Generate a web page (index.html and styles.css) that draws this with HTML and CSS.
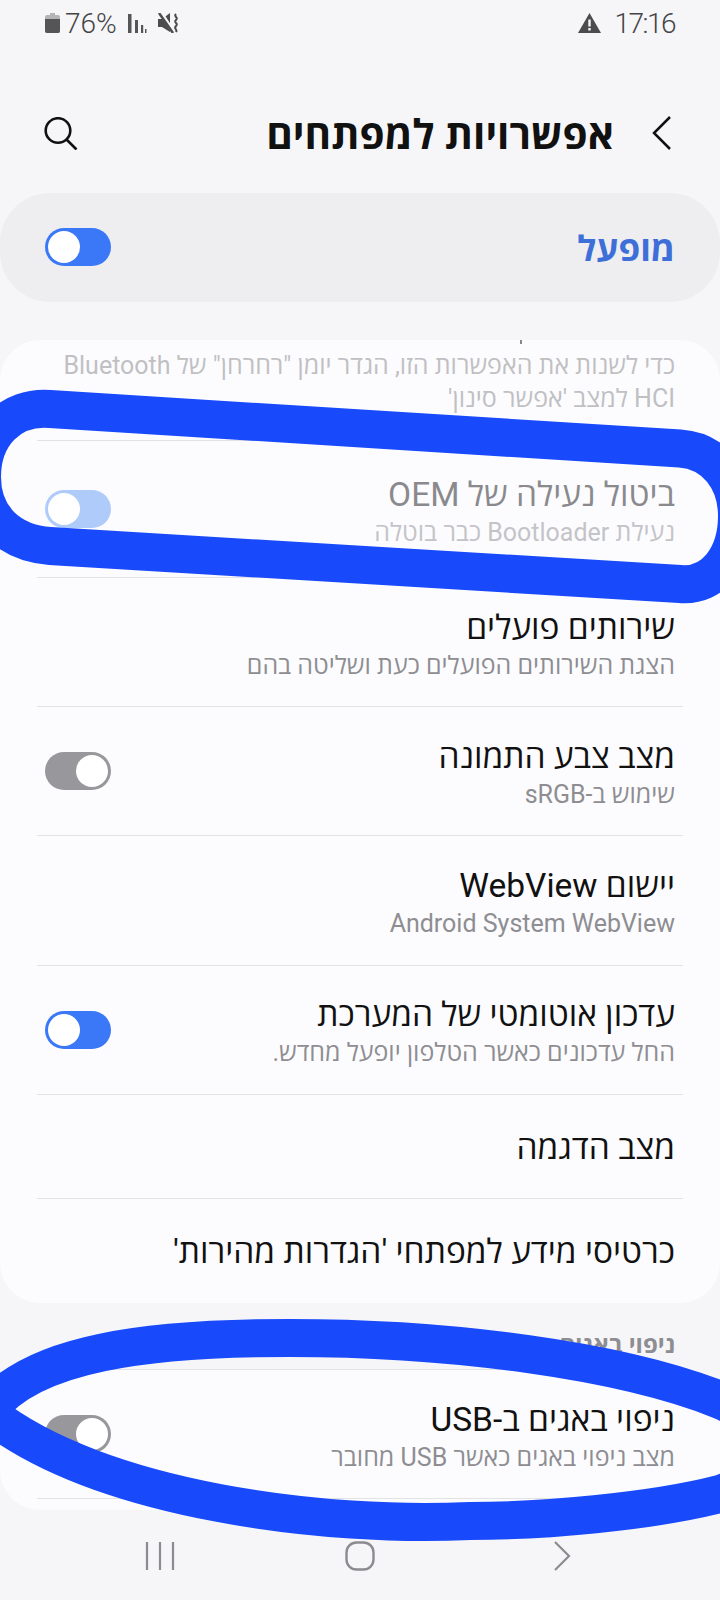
FILE: index.html
```html
<!DOCTYPE html>
<html lang="he" dir="rtl">
<head>
    <meta charset="UTF-8">
    <meta name="viewport" content="width=device-width, initial-scale=1.0">
    <title>אפשרויות למפתחים</title>
    <link rel="stylesheet" href="styles.css">
</head>
<body>
<div class="screen">

    <!-- Status bar -->
    <div class="status" dir="ltr">
        <div class="status-side">
            <svg class="ic-battery" width="15" height="20" viewBox="0 0 15 20"><path d="M5 0h5v2h3a2 2 0 0 1 2 2v14a2 2 0 0 1-2 2H2a2 2 0 0 1-2-2V4a2 2 0 0 1 2-2h3z" fill="#b4b4b7"/><path d="M0 6h15v12a2 2 0 0 1-2 2H2a2 2 0 0 1-2-2z" fill="#555558"/></svg>
            <span class="status-text">76%</span>
            <svg class="ic-signal" width="19" height="19" viewBox="0 0 19 19"><path d="M0 0v19h3.500V0zM7 6v13h3V6zM13 11v8h2.200v-8zM17 15v4h1.500v-4z" fill="#555558"/></svg>
            <svg class="ic-mute" width="21" height="20" viewBox="0 0 21 20"><path d="M0 6h4l8-6v19l-8-5H0z" fill="#4c4c4f"/><path d="M3 0l13 20" stroke="#f6f6f8" stroke-width="4"/><path d="M1 0l14 20" stroke="#4c4c4f" stroke-width="2.500"/><path d="M18 1c-3 3 3 3 0 6s3 3 0 6 2 3 0 6" fill="none" stroke="#4c4c4f" stroke-width="2"/></svg>
        </div>
        <div class="status-side">
            <svg width="23" height="20" viewBox="0 0 23 20"><path d="M11.500 0L23 20H0z" fill="#4c4c4f"/><path d="M10.300 6.500h2.400v7h-2.400zM10.300 15h2.400v2.500h-2.400z" fill="#f6f6f8"/></svg>
            <span class="status-text status-time">17:16</span>
        </div>
    </div>

    <!-- Header -->
    <header class="topbar">
        <svg class="chev" width="20" height="34" viewBox="0 0 20 34"><path d="M2 1l16 16L2 33" fill="none" stroke="#111" stroke-width="2.500"/></svg>
        <h1>אפשרויות למפתחים</h1>
        <svg class="search" width="34" height="33" viewBox="0 0 34 33"><circle cx="14" cy="13.500" r="12.300" fill="none" stroke="#111" stroke-width="2.600"/><path d="M22.500 22.500l10 10" stroke="#111" stroke-width="2.600"/></svg>
    </header>

    <!-- Master switch -->
    <div class="master">
        <span class="master-label">מופעל</span>
        <span class="toggle on"></span>
    </div>

    <!-- Main list -->
    <section class="card card-main">
        <span class="clip-mark"></span>
        <div class="note">כדי לשנות את האפשרות הזו, הגדר יומן "רחרחן" של Bluetooth HCI למצב 'אפשר סינון'</div>

        <div class="row row-off">
            <div class="row-text">
                <div class="row-title">ביטול נעילה של OEM</div>
                <div class="row-sub">נעילת Bootloader כבר בוטלה</div>
            </div>
            <span class="toggle on disabled"></span>
        </div>

        <div class="row">
            <div class="row-text">
                <div class="row-title">שירותים פועלים</div>
                <div class="row-sub">הצגת השירותים הפועלים כעת ושליטה בהם</div>
            </div>
        </div>

        <div class="row">
            <div class="row-text">
                <div class="row-title">מצב צבע התמונה</div>
                <div class="row-sub">שימוש ב-sRGB</div>
            </div>
            <span class="toggle"></span>
        </div>

        <div class="row">
            <div class="row-text">
                <div class="row-title">יישום WebView</div>
                <div class="row-sub">Android System WebView</div>
            </div>
        </div>

        <div class="row">
            <div class="row-text">
                <div class="row-title">עדכון אוטומטי של המערכת</div>
                <div class="row-sub">החל עדכונים כאשר הטלפון יופעל מחדש.</div>
            </div>
            <span class="toggle on"></span>
        </div>

        <div class="row row-single">
            <div class="row-text">
                <div class="row-title">מצב הדגמה</div>
            </div>
        </div>

        <div class="row row-single">
            <div class="row-text">
                <div class="row-title">כרטיסי מידע למפתחי 'הגדרות מהירות'</div>
            </div>
        </div>
    </section>

    <div class="section-label">ניפוי באגים</div>

    <section class="card card-debug">
        <div class="row">
            <div class="row-text">
                <div class="row-title">ניפוי באגים ב-USB</div>
                <div class="row-sub">מצב ניפוי באגים כאשר USB מחובר</div>
            </div>
            <span class="toggle"></span>
        </div>
        <div class="row row-cut"></div>
    </section>

    <!-- Navigation bar -->
    <nav class="navbar" dir="ltr">
        <svg width="30" height="30" viewBox="0 0 30 30"><path d="M2 1v28M15 1v28M28 1v28" stroke="#8c8c90" stroke-width="2.200"/></svg>
        <svg class="nav-home" width="30" height="30" viewBox="0 0 30 30"><rect x="1.500" y="1.500" width="27" height="27" rx="10" fill="none" stroke="#8c8c90" stroke-width="2.400"/></svg>
        <svg width="18" height="30" viewBox="0 0 18 30"><path d="M2 1l14 14L2 29" fill="none" stroke="#8c8c90" stroke-width="2.200"/></svg>
    </nav>

    <!-- Hand-drawn marks over the screenshot -->
    <svg class="marks" width="720" height="1600" viewBox="0 0 720 1600">
        <path d="M50 409L680 448.500C715 451 737 480 737 516C737 555 715 587 680 584L50 546C10 543 -18 518 -18 477C-18 435 10 406 50 409Z" fill="none" stroke="#1849fa" stroke-width="38"/>
        <path d="M-13 1412C30 1352 150 1338 290 1338C450 1338 620 1360 720 1400C770 1420 780 1475 720 1494C650 1512 540 1521 470 1521C330 1528 100 1502 -13 1412Z" fill="none" stroke="#1849fa" stroke-width="38"/>
    </svg>
</div>
</body>
</html>
```

FILE: styles.css
```css
/* General */
body {
    margin: 0;
    background-color: #f6f6f8;
    font-family: Roboto, "Open Sans", "Liberation Sans", sans-serif;
    color: #111;
}

.screen {
    width: 720px;
    height: 1600px;
    position: relative;
    overflow: hidden;
}

/* Status bar */
.status {
    height: 46px;
    display: flex;
    justify-content: space-between;
    align-items: center;
    padding: 0 45px;
}

.status-side {
    display: flex;
    align-items: center;
}

.status-text {
    font-size: 28px;
    font-weight: 300;
    color: #444447;
    margin-left: 5px;
}

.status-time {
    margin-left: 13px;
    letter-spacing: -1.5px;
}

.ic-signal {
    margin-left: 11px;
}

.ic-mute {
    margin-left: 11px;
}

/* Header */
.topbar {
    height: 147px;
    display: flex;
    align-items: center;
    padding: 27px 48px 0 44px;
    box-sizing: border-box;
}

.topbar h1 {
    flex: 1;
    margin: 0 38px 0 0;
    font-size: 40.5px;
    font-weight: 700;
}

.chev {
    transform: scaleX(-1);
}

/* Master switch */
.master {
    height: 109px;
    box-sizing: border-box;
    background-color: #eeeef0;
    border-radius: 50px;
    display: flex;
    justify-content: space-between;
    align-items: center;
    padding: 0 45px 1px;
    margin-bottom: 38px;
}

.master-label {
    color: #3e6fd8;
    font-size: 35px;
    font-weight: 700;
}

/* Toggles */
.toggle {
    width: 66px;
    height: 38px;
    border-radius: 19px;
    background-color: #98989c;
    position: relative;
    flex: none;
}

.toggle::after {
    content: "";
    position: absolute;
    top: 3px;
    right: 3px;
    width: 32px;
    height: 32px;
    border-radius: 50%;
    background-color: #fff;
}

.toggle.on {
    background-color: #3a78f8;
}

.toggle.on::after {
    right: auto;
    left: 3px;
}

.toggle.disabled {
    background-color: #aecbfa;
}

/* Cards and rows */
.card {
    background-color: #fcfcfe;
    overflow: hidden;
    position: relative;
}

.card-main {
    height: 963px;
    border-radius: 40px;
}

.card-debug {
    height: 141px;
    border-radius: 40px;
}

.clip-mark {
    position: absolute;
    top: 0;
    left: 520px;
    width: 2px;
    height: 4px;
    background-color: #888;
}

.note {
    height: 100px;
    box-sizing: border-box;
    padding: 9px 45px 0;
    font-size: 25px;
    line-height: 33px;
    color: #c0c0c3;
}

.row {
    min-height: 129.2px;
    box-sizing: border-box;
    margin: 0 37px;
    padding: 0 8px;
    border-top: 1px solid #e3e3e6;
    display: flex;
    justify-content: space-between;
    align-items: center;
}

.row-single {
    min-height: 104px;
}

.row-off {
    min-height: 137px;
}

.row-cut {
    min-height: 11px;
}

.row-text {
    padding-top: 3px;
}

.row-title {
    font-size: 33.5px;
    line-height: 43px;
}

.row-sub {
    font-size: 25px;
    line-height: 33px;
    color: #8e8e92;
}

.row-off .row-title {
    color: #8a8a8e;
}

.row-off .row-sub {
    color: #c4c4c8;
}

.section-label {
    height: 66px;
    box-sizing: border-box;
    padding: 27px 45px 0;
    font-size: 24px;
    font-weight: 700;
    line-height: 30px;
    color: #8e8e92;
}

/* Navigation bar */
.navbar {
    height: 90px;
    display: flex;
    align-items: center;
    padding: 2px 0 0 145px;
    box-sizing: border-box;
}

.nav-home {
    margin: 0 178px 0 170px;
}

/* Marks */
.marks {
    position: absolute;
    top: 0;
    left: 0;
    pointer-events: none;
}
```
